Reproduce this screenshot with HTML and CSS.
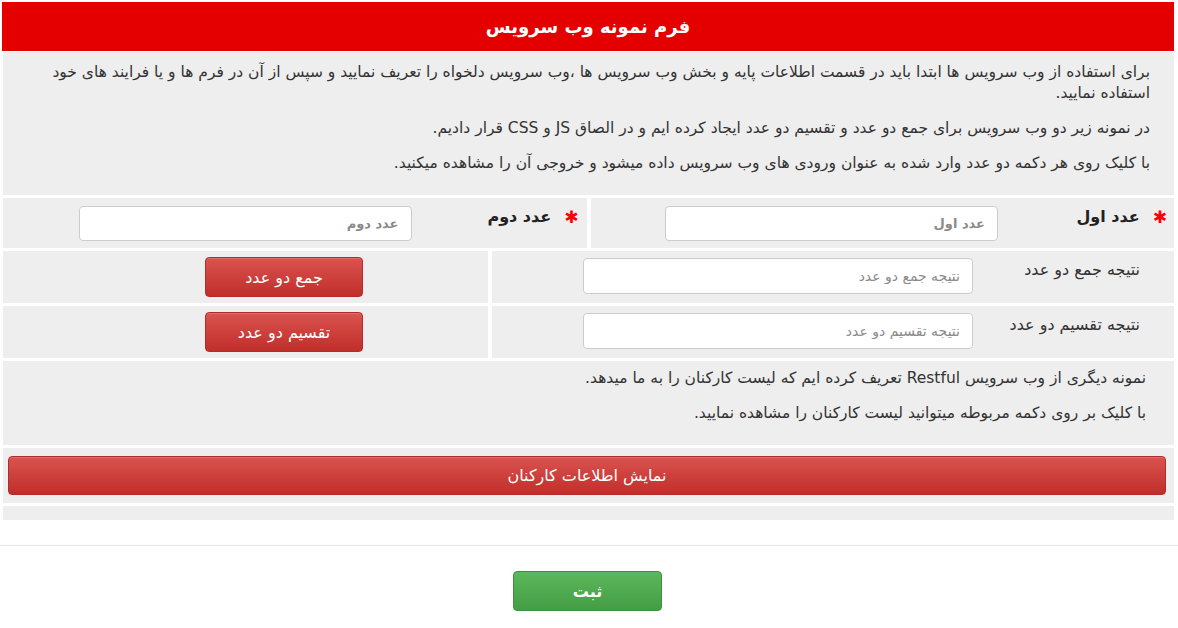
FILE: index.html
```html
<!DOCTYPE html>
<html lang="fa" dir="rtl">
<head>
<meta charset="utf-8">
<title>فرم نمونه وب سرویس</title>
<link rel="stylesheet" href="styles.css">
</head>
<body>
<div class="page">
  <div class="header">فرم نمونه وب سرویس</div>
  <div class="intro">
    <p>برای استفاده از وب سرویس ها ابتدا باید در قسمت اطلاعات پایه و بخش وب سرویس ها ،وب سرویس دلخواه را تعریف نمایید و سپس از آن در فرم ها و یا فرایند های خود استفاده نمایید.</p>
    <p>در نمونه زیر دو وب سرویس برای جمع دو عدد و تقسیم دو عدد ایجاد کرده ایم و در الصاق JS و CSS قرار دادیم.</p>
    <p>با کلیک روی هر دکمه دو عدد وارد شده به عنوان ورودی های وب سرویس داده میشود و خروجی آن را مشاهده میکنید.</p>
  </div>
  <div class="row row-inputs">
    <div class="cell cell-half">
      <label class="req-label"><span class="star">✱</span>عدد اول</label>
      <input class="field field-bold" type="text" placeholder="عدد اول">
    </div>
    <div class="cell cell-half cell-left">
      <label class="req-label"><span class="star">✱</span>عدد دوم</label>
      <input class="field field-bold" type="text" placeholder="عدد دوم">
    </div>
  </div>
  <div class="row row-result">
    <div class="cell cell-wide">
      <label class="plain-label">نتیجه جمع دو عدد</label>
      <input class="field field-result" type="text" placeholder="نتیجه جمع دو عدد">
    </div>
    <div class="cell cell-narrow">
      <button class="btn btn-red btn-small">جمع دو عدد</button>
    </div>
  </div>
  <div class="row row-result">
    <div class="cell cell-wide">
      <label class="plain-label">نتیجه تقسیم دو عدد</label>
      <input class="field field-result" type="text" placeholder="نتیجه تقسیم دو عدد">
    </div>
    <div class="cell cell-narrow">
      <button class="btn btn-red btn-small">تقسیم دو عدد</button>
    </div>
  </div>
  <div class="row info">
    <p>نمونه دیگری از وب سرویس Restful تعریف کرده ایم که لیست کارکنان را به ما میدهد.</p>
    <p>با کلیک بر روی دکمه مربوطه میتوانید لیست کارکنان را مشاهده نمایید.</p>
  </div>
  <div class="row row-wide-btn">
    <button class="btn btn-red btn-full">نمایش اطلاعات کارکنان</button>
  </div>
  <div class="row row-empty"></div>
</div>
<div class="footer">
  <button class="btn btn-green">ثبت</button>
</div>
</body>
</html>
```

FILE: styles.css
```css
html, body {
  margin: 0;
  padding: 0;
  background: #ffffff;
}
body {
  font-family: "DejaVu Sans", "Noto Sans", sans-serif;
  color: #333333;
  direction: rtl;
}
.page {
  margin: 2px 4px 0 3px;
  display: flex;
  flex-direction: column;
  gap: 3px;
}
.header {
  background: #e50000;
  color: #ffffff;
  font-weight: bold;
  font-size: 18px;
  height: 49px;
  display: flex;
  align-items: center;
  justify-content: center;
  margin-left: -1px;
}
.intro {
  background: #eeeeee;
  margin-top: -2px;
  padding: 10px 24px 21px 22px;
  font-size: 15.5px;
  line-height: 21px;
}
.intro p {
  margin: 0 0 14px 0;
}
.intro p:last-child {
  margin-bottom: 0;
}
.row {
  display: flex;
  gap: 4px;
}
.cell {
  background: #eeeeee;
  display: flex;
  align-items: flex-start;
}
.row-inputs .cell {
  height: 50px;
}
.cell-half {
  flex: 1 1 0;
  padding-top: 8px;
  box-sizing: border-box;
}
.req-label {
  font-weight: bold;
  font-size: 16px;
  color: #222222;
  display: flex;
  align-items: center;
  gap: 13px;
  padding-top: 1px;
}
.row-inputs .cell:first-child .req-label {
  width: 176px;
  padding-right: 7px;
  box-sizing: border-box;
}
.row-inputs .cell-left .req-label {
  width: 175px;
  padding-right: 8px;
  box-sizing: border-box;
}
.star {
  color: #ff0000;
  font-size: 17px;
  line-height: 16px;
}
.field {
  height: 35px;
  box-sizing: border-box;
  border: 1px solid #cccccc;
  border-radius: 4px;
  background: #ffffff;
  padding: 0 12px;
  font-family: "DejaVu Sans", sans-serif;
  direction: rtl;
}
.field::placeholder {
  color: #8a8a8a;
}
.field-bold {
  width: 333px;
  font-size: 13px;
  font-weight: bold;
}
.row-result .cell {
  height: 52px;
  box-sizing: border-box;
}
.cell-wide {
  width: 682px;
  padding-top: 7px;
}
.plain-label {
  width: 201px;
  font-size: 16px;
  color: #333333;
  padding-right: 34px;
  padding-top: 2px;
  box-sizing: border-box;
}
.field-result {
  width: 390px;
  font-size: 14px;
  height: 36px;
}
.cell-narrow {
  flex: 1 1 0;
  padding-top: 6px;
  justify-content: flex-end;
  padding-left: 202px;
}
.btn {
  font-family: "DejaVu Sans", sans-serif;
  color: #ffffff;
  border-radius: 4px;
  cursor: pointer;
}
.btn-red {
  background: linear-gradient(to bottom, #d9534f 0%, #c12e2a 100%);
  border: 1px solid #b52b27;
  box-shadow: inset 0 1px 0 rgba(255,255,255,0.15);
}
.btn-small {
  width: 158px;
  height: 40px;
  font-size: 16px;
}
.info {
  background: #eeeeee;
  flex-direction: column;
  gap: 0;
  padding: 6px 28px 21px 28px;
  font-size: 15.5px;
  line-height: 22px;
}
.info p {
  margin: 0 0 13px 0;
}
.info p:last-child {
  margin-bottom: 0;
}
.row-wide-btn {
  background: #eeeeee;
  padding: 8px 8px 8px 5px;
  height: 55px;
  box-sizing: border-box;
}
.btn-full {
  flex: 1 1 auto;
  height: 39px;
  font-size: 16px;
}
.row-empty {
  background: #eeeeee;
  height: 14px;
}
.footer {
  margin-top: 25px;
  border-top: 1px solid #e5e5e5;
  display: flex;
  justify-content: center;
  padding: 25px 0 0 0;
}
.btn-green {
  width: 149px;
  height: 40px;
  background: linear-gradient(to bottom, #5cb85c 0%, #449d44 100%);
  border: 1px solid #3e8f3e;
  font-weight: bold;
  font-size: 16px;
  margin-right: 3px;
}
```
